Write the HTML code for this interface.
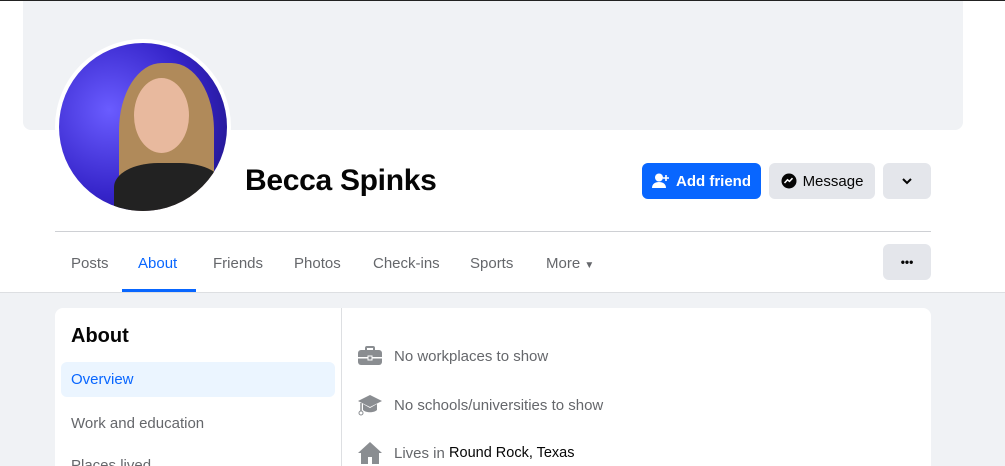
<!DOCTYPE html>
<html><head><style>
*{margin:0;padding:0;box-sizing:border-box}
html,body{width:1005px;height:466px;overflow:hidden}
body{background:#fff;font-family:"Liberation Sans",Arial,sans-serif;position:relative}
.top{position:absolute;left:0;top:0;width:1005px;height:1px;background:#222}
.cover{position:absolute;left:23px;top:1px;width:940px;height:129px;background:#f0f2f5;border-radius:0 0 8px 8px}
.av{position:absolute;left:55px;top:39px;width:176px;height:176px;border-radius:50%;background:#fff;padding:4px}
.av>div{width:168px;height:168px;border-radius:50%;overflow:hidden;background:radial-gradient(circle at 30% 40%,#6a5cff,#3524c9 55%,#1a1070);position:relative}
.name{position:absolute;left:245px;top:164px;font-size:30px;font-weight:bold;color:#050505;letter-spacing:-0.3px}
.btn{position:absolute;top:163px;height:36px;border-radius:6px;font-size:15px;font-weight:bold;display:flex;align-items:center;justify-content:center}
.hr{position:absolute;left:55px;top:231px;width:876px;height:1px;background:#ced0d4}
.tab{position:absolute;top:255px;font-size:15px;color:#65676b}
.bot{position:absolute;left:0;top:292px;width:1005px;height:174px;background:#f0f2f5;border-top:1px solid #dddfe2}
.card{position:absolute;left:55px;top:308px;width:876px;height:170px;background:#fff;border-radius:8px}
.row{position:absolute;left:358px;font-size:15px;color:#65676b;display:flex;align-items:center}
.row svg{margin-right:12px}
</style></head><body>
<div class="top"></div>
<div class="cover"></div>
<div class="av"><div>
<div style="position:absolute;left:60px;top:20px;width:95px;height:150px;border-radius:45% 45% 20% 20%;background:#b08a5a"></div>
<div style="position:absolute;left:75px;top:35px;width:55px;height:75px;border-radius:50%;background:#e8b99e"></div>
<div style="position:absolute;left:55px;top:120px;width:110px;height:60px;background:#222;border-radius:40% 40% 0 0"></div>
</div></div>
<div class="name">Becca Spinks</div>
<div class="btn" style="left:642px;width:119px;background:#0866ff;color:#fff">
<svg width="18" height="16" viewBox="0 0 18 16" style="margin-right:6px"><circle cx="7" cy="4.5" r="4" fill="#fff"/><path d="M0 15c0-4 3-6 7-6s7 2 7 6z" fill="#fff"/><path d="M14 2v6M11 5h6" stroke="#fff" stroke-width="1.6"/></svg>Add friend</div>
<div class="btn" style="left:769px;width:106px;background:#e4e6eb;color:#050505;font-weight:normal">
<svg width="16" height="16" viewBox="0 0 16 16" style="margin-right:6px"><circle cx="8" cy="8" r="7.5" fill="#050505"/><path d="M3.5 10l3-3.2 2 1.6 3-3.2" stroke="#fff" stroke-width="1.5" fill="none"/></svg>Message</div>
<div class="btn" style="left:883px;width:48px;background:#e4e6eb"><svg width="12" height="8" viewBox="0 0 12 8"><path d="M2 2l4 4 4-4" stroke="#050505" stroke-width="2" fill="none"/></svg></div>
<div class="hr"></div>
<div class="tab" style="left:71px">Posts</div>
<div class="tab" style="left:138px;color:#0866ff">About</div>
<div style="position:absolute;left:122px;top:289px;width:74px;height:3px;background:#0866ff"></div>
<div class="tab" style="left:213px">Friends</div>
<div class="tab" style="left:294px">Photos</div>
<div class="tab" style="left:373px">Check-ins</div>
<div class="tab" style="left:470px">Sports</div>
<div class="tab" style="left:546px">More <span style="font-size:10px">▼</span></div>
<div class="btn" style="left:883px;top:244px;width:48px;background:#e4e6eb;font-size:12px;color:#050505">•••</div>
<div class="bot"></div>
<div class="card">
<div style="position:absolute;left:286px;top:0;width:1px;height:170px;background:#dddfe2"></div>
<div style="position:absolute;left:16px;top:17px;font-size:20px;font-weight:bold;color:#050505">About</div>
<div style="position:absolute;left:6px;top:54px;width:274px;height:35px;background:#ebf5ff;border-radius:6px;color:#0866ff;font-size:15px;padding:9px 10px">Overview</div>
<div style="position:absolute;left:16px;top:107px;font-size:15px;color:#65676b">Work and education</div>
<div style="position:absolute;left:16px;top:149px;font-size:15px;color:#65676b">Places lived</div>
</div>
<div class="row" style="top:346px"><svg width="24" height="20" viewBox="0 0 24 20"><rect x="8" y="1" width="8" height="4" rx="1" fill="none" stroke="#8a8d91" stroke-width="2"/><rect x="0" y="4" width="24" height="15" rx="3" fill="#8a8d91"/><rect x="0" y="11" width="24" height="1.5" fill="#fff"/><rect x="10" y="10" width="4" height="4" fill="#8a8d91" stroke="#fff"/></svg>No workplaces to show</div>
<div class="row" style="top:394px"><svg width="24" height="22" viewBox="0 0 24 22"><path d="M12 1L0 7l12 6 12-6z" fill="#8a8d91"/><path d="M5 10v6c3 3 11 3 14 0v-6l-7 4z" fill="#8a8d91"/><path d="M3 9v8" stroke="#8a8d91" stroke-width="1.5"/><circle cx="3" cy="19" r="2" fill="none" stroke="#8a8d91"/></svg>No schools/universities to show</div>
<div class="row" style="top:442px"><svg width="24" height="22" viewBox="0 0 24 22"><path d="M12 0L0 11h3v11h7v-7h4v7h7V11h3z" fill="#8a8d91"/></svg>Lives in&nbsp;<span style="color:#050505;font-size:14.5px">Round Rock, Texas</span></div>
</body></html>
